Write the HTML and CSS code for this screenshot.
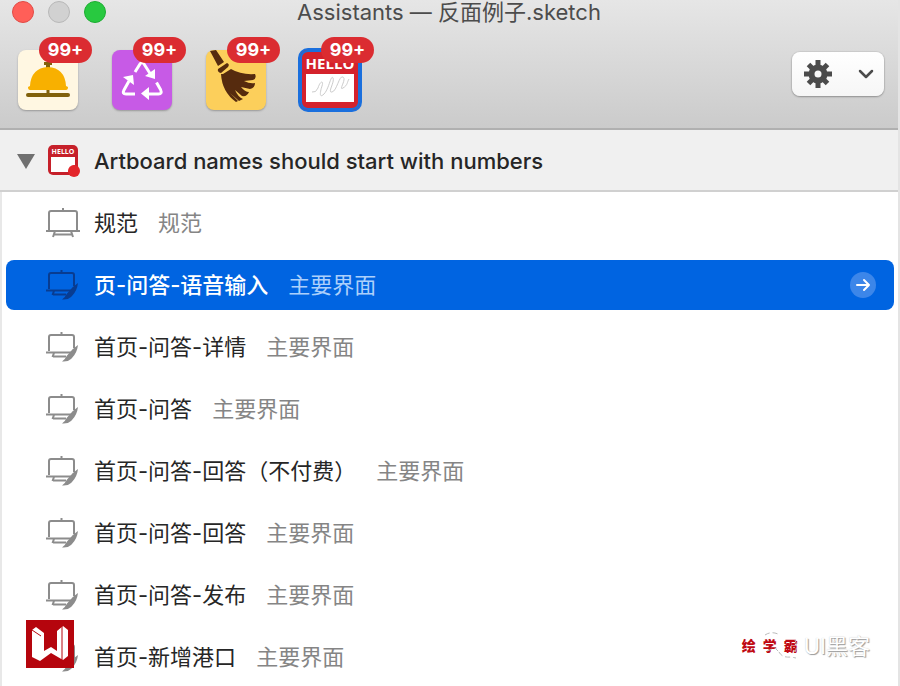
FILE: index.html
```html
<!DOCTYPE html>
<html lang="zh-CN">
<head>
<meta charset="utf-8">
<meta name="viewport" content="width=device-width, initial-scale=1">
<title>Assistants — 反面例子.sketch</title>
<link rel="stylesheet" href="styles.css">
</head>
<body>
<svg class="defs" aria-hidden="true">
  <symbol id="board" viewBox="0 0 36 32">
    <path d="M3 23V6q0-2 2-2h24q2 0 2 2v17M0 24h34M17 4V1M9 24l-2 6M25 24l2 6M8 27.500h18" fill="none" stroke="currentColor" stroke-width="2"/>
  </symbol>
  <symbol id="board-pen" viewBox="0 0 36 32">
    <path d="M3 20V6q0-2 2-2h21q2 0 2 2v11M0 21.500h25M15.500 4V1M8 22l-1.500 4M7 25.500h13" fill="none" stroke="currentColor" stroke-width="2"/>
    <path d="M32 14q-5 3-10 9.500l-1 1q-2 4-5 6 6 .5 9-2.500l1-1q5-5 6-13z" fill="currentColor"/>
  </symbol>
</svg>
<div class="window">
  <header class="toolbar">
    <div class="titlebar">
      <div class="lights">
        <button class="light close" aria-label="Close"></button>
        <button class="light idle" aria-label="Minimize"></button>
        <button class="light grow" aria-label="Zoom"></button>
      </div>
      <h1 class="title">Assistants — 反面例子.sketch</h1>
    </div>
    <div class="tools">
      <nav class="assistants">
        <button class="assistant cream" aria-label="Reception">
          <svg viewBox="0 0 60 60" aria-hidden="true">
            <path d="M26 12h8v3h-2v4h-4v-4h-2zM28.500 39h3v6h-3z" fill="#81610b"/>
            <path d="M12 36q1-18 18-19 17 1 18 19l2 1q0 3-2 3H12q-2 0-2-3z" fill="#f8b000"/>
            <rect x="8" y="43" width="44" height="4" rx="2" fill="#81610b"/>
          </svg>
          <span class="badge">99+</span>
        </button>
        <button class="assistant purple" aria-label="Recycle">
          <svg viewBox="0 0 60 60" aria-hidden="true">
            <path d="M23 22l5-8q2-3 4 0l7 11M44.500 32.500l4 7q2 4.500-2 4.500H36M23 44H14q-4 0-2-4l5-9" fill="none" stroke="#fff" stroke-width="3" stroke-linejoin="round"/>
            <path d="M43 19v10l-10-3zM37 37v13l-8-6.500zM11 27l10-2 1 10z" fill="#fff"/>
          </svg>
          <span class="badge">99+</span>
        </button>
        <button class="assistant yellow" aria-label="Tidy">
          <svg viewBox="0 0 60 60" aria-hidden="true">
            <path d="M4 1l6-1 8 12-6 4zM12 19l9-6q3 1 1 4l-7 6q-4-1-3-4z" fill="#562b0e"/>
            <path d="M17 24l8-5q10 6 24 5 2 4-2 6l-9 1q6 3 11 2 0 5-5 6l-9-2q4 5 8 5-2 5-7 4l-7-6q3 7 8 9l-4 2-9-8 8 8-2 1q-14-10-15-28z" fill="#562b0e"/>
          </svg>
          <span class="badge">99+</span>
        </button>
        <button class="assistant hello" aria-label="Naming" aria-pressed="true">
          <svg viewBox="0 0 60 60" aria-hidden="true">
            <text x="30" y="19" class="hello-text" text-anchor="middle">HELLO</text>
            <rect x="6" y="24" width="48" height="28" fill="#fff"/>
            <path d="M12 42q4 1 6-4c2-7 6-8 4-2s-3 13 2 8 7-20 9-16-6 15-1 14 7-17 11-15-5 14 0 11 4-6 6-9" fill="none" stroke="#ccc" stroke-width="1"/>
          </svg>
          <span class="badge">99+</span>
        </button>
      </nav>
      <button class="settings" aria-label="Settings">
        <svg class="gear" viewBox="0 0 28 28" aria-hidden="true">
          <g stroke="#4b4b4b" stroke-width="5">
            <path d="M14 0v28M0 14h28M4.500 4.500l19 19M4.500 23.500l19-19"/>
          </g>
          <circle cx="14" cy="14" r="9.500" fill="#4b4b4b"/>
          <circle cx="14" cy="14" r="3.500" fill="#f8f8f8"/>
        </svg>
        <svg class="chevron" viewBox="0 0 16 10" aria-hidden="true">
          <path d="M2 2l6 6 6-6" fill="none" stroke="#4b4b4b" stroke-width="2.500" stroke-linecap="round" stroke-linejoin="round"/>
        </svg>
      </button>
    </div>
  </header>
  <main class="results">
    <h2 class="group">
      <svg class="disclosure" viewBox="0 0 18 15" aria-hidden="true"><path d="M0 0h18L9 15z" fill="#707070"/></svg>
      <svg class="group-icon" viewBox="0 0 34 34" aria-hidden="true">
        <rect x="1" y="1" width="30" height="30" rx="5" fill="#c6202a"/>
        <text x="16" y="10" class="mini-text" text-anchor="middle">HELLO</text>
        <path d="M4 13h24v8q-6 1-7 7H4z" fill="#fff"/>
        <circle cx="27" cy="27" r="6" fill="#e3252b"/>
      </svg>
      <span>Artboard names should start with numbers</span>
    </h2>
    <ul class="list">
      <li class="row"><svg class="icon" aria-hidden="true"><use href="#board"/></svg><span class="name">规范</span><span class="page">规范</span></li>
      <li class="row selected"><svg class="icon" aria-hidden="true"><use href="#board-pen"/></svg><span class="name">页-问答-语音输入</span><span class="page">主要界面</span>
        <button class="go" aria-label="Show layer"><svg viewBox="0 0 26 26" aria-hidden="true"><path d="M7 13h12M14 8l5 5-5 5" fill="none" stroke="#fff" stroke-width="2" stroke-linecap="round" stroke-linejoin="round"/></svg></button></li>
      <li class="row"><svg class="icon" aria-hidden="true"><use href="#board-pen"/></svg><span class="name">首页-问答-详情</span><span class="page">主要界面</span></li>
      <li class="row"><svg class="icon" aria-hidden="true"><use href="#board-pen"/></svg><span class="name">首页-问答</span><span class="page">主要界面</span></li>
      <li class="row"><svg class="icon" aria-hidden="true"><use href="#board-pen"/></svg><span class="name">首页-问答-回答（不付费）</span><span class="page">主要界面</span></li>
      <li class="row"><svg class="icon" aria-hidden="true"><use href="#board-pen"/></svg><span class="name">首页-问答-回答</span><span class="page">主要界面</span></li>
      <li class="row"><svg class="icon" aria-hidden="true"><use href="#board-pen"/></svg><span class="name">首页-问答-发布</span><span class="page">主要界面</span></li>
      <li class="row"><svg class="icon" aria-hidden="true"><use href="#board-pen"/></svg><span class="name">首页-新增港口</span><span class="page">主要界面</span></li>
    </ul>
  </main>
  <svg class="stamp" viewBox="0 0 48 48" aria-hidden="true">
    <rect width="48" height="48" fill="#b5050d"/>
    <path d="M6 10l4-3 8 6v18l7-4 6 4V11l6-5 5 4v26l-5 4-12-7-11 8-8-4z" fill="#fff"/>
    <path d="M6 10l9 6M36 6v34" fill="none" stroke="#b5050d" stroke-width="1"/>
  </svg>
  <div class="credit">
    <span class="credit-red"><span>绘</span> <span>学</span> <span>霸</span></span>
    <svg class="bubbles" viewBox="0 0 36 28" aria-hidden="true">
      <path d="M3 3q6-4 13-1M5 19l8-3 4 4M17 20q3 6 12 5l5 1M33 8q3 6 0 12" fill="none" stroke="#bbb" stroke-width="1" stroke-dasharray="5 3"/>
    </svg>
    <span class="credit-ghost">UI黑客</span>
  </div>
</div>
</body>
</html>
```
FILE: styles.css
```css
* { box-sizing: border-box; }

body {
  margin: 0;
  background: #fff;
  color: #262626;
  font: 22px/30px Inter, "Noto Sans CJK SC", sans-serif;
}

button {
  padding: 0;
  border: 0;
  font: inherit;
}

.defs {
  position: absolute;
  width: 0;
  height: 0;
}

.window {
  position: relative;
  height: 100vh;
  overflow: hidden;
  border-right: 2px solid #e4e4e4;
}

.toolbar {
  height: 130px;
  border-bottom: 2px solid #b0b0b0;
  background: linear-gradient(#e6e6e6, #cbcbcb);
}

.titlebar {
  display: grid;
  grid-template-columns: 1fr auto 1fr;
  height: 26px;
}

.lights {
  display: flex;
  gap: 14px;
  padding: 1px 0 0 12px;
}

.light {
  width: 22px;
  height: 22px;
  border: 1px solid;
  border-radius: 50%;
}

.close { background: #ff5f58; border-color: #e14b46; }
.idle { background: #d1d1d1; border-color: #b8b8b8; }
.grow { background: #28c940; border-color: #1dad32; }

.title {
  margin: 0;
  color: #4c4c4c;
  font-size: 22px;
  font-weight: 400;
  line-height: 24px;
}

.tools {
  display: flex;
  justify-content: space-between;
  padding: 24px 14px 0 18px;
}

.assistants {
  display: flex;
  gap: 34px;
}

.assistant {
  position: relative;
  width: 60px;
  height: 60px;
  border-radius: 8px;
  box-shadow: 0 1px 2px #0004;
}

.assistant svg {
  display: block;
  width: 60px;
  height: 60px;
}

.cream { background: #fff7e2; }
.purple { background: #c75ae6; }
.yellow { background: #fccf5b; }

.hello {
  background: #d4222c;
  box-shadow: inset 0 0 0 2px #1a6fdd, 0 0 0 2px #1a6fdd;
}

.hello-text {
  fill: #fff;
  font: 700 15px "Open Sans", sans-serif;
}

.mini-text {
  fill: #fff;
  font: 700 7px "Open Sans", sans-serif;
}

.badge {
  position: absolute;
  top: -13px;
  left: 21px;
  width: 53px;
  height: 26px;
  border-radius: 13px;
  background: #db2c31;
  color: #fff;
  font-size: 18px;
  font-weight: 700;
  line-height: 26px;
  text-align: center;
}

.settings {
  display: flex;
  align-items: center;
  justify-content: space-between;
  width: 92px;
  height: 44px;
  margin-top: 2px;
  padding: 0 10px 0 12px;
  border-radius: 8px;
  background: linear-gradient(#fff, #f6f6f6);
  box-shadow: 0 0 1px 1px #0001, 0 1px 2px #0004;
}

.gear { width: 28px; height: 28px; }
.chevron { width: 16px; height: 10px; }

.group {
  display: flex;
  align-items: center;
  height: 62px;
  margin: 0;
  padding: 2px 0 0 17px;
  border-bottom: 2px solid #d0d0d0;
  background: #f0f0f0;
  font-size: 22px;
  font-weight: 500;
}

.disclosure { width: 18px; height: 15px; }

.group-icon {
  width: 34px;
  height: 34px;
  margin: 0 13px 0 12px;
}

.list {
  display: flex;
  flex-direction: column;
  gap: 12px;
  margin: 0;
  padding: 6px 4px 6px 6px;
  border-left: 2px solid #e8e8e8;
  list-style: none;
}

.row {
  display: flex;
  align-items: center;
  height: 50px;
  padding-left: 38px;
  border-radius: 8px;
  white-space: nowrap;
}

.icon {
  width: 36px;
  height: 32px;
  margin-right: 12px;
  color: #8c8c8c;
}

.page {
  margin-left: 20px;
  color: #858585;
}

.selected {
  margin-left: -2px;
  padding: 0 18px 0 40px;
  background: #0064e1;
  color: #fff;
  font-weight: 500;
}

.selected .icon { color: #083c91; }

.selected .page {
  color: #acd0fb;
  font-weight: 400;
}

.go {
  width: 26px;
  height: 26px;
  margin-left: auto;
  border-radius: 50%;
  background: #3c86e9;
}

.go svg { display: block; }

.stamp {
  position: absolute;
  bottom: 18px;
  left: 26px;
  width: 48px;
  height: 48px;
}

.credit {
  position: absolute;
  right: 28px;
  bottom: 25px;
  display: flex;
  align-items: center;
}

.credit-red {
  display: flex;
  gap: 7px;
  color: #c00a14;
  font-size: 14px;
  font-weight: 900;
}

.bubbles {
  width: 36px;
  height: 28px;
  margin: 0 6px 0 -36px;
}

.credit-ghost {
  color: #fff;
  text-shadow: 1px 1px 1px #999, 0 0 1px #ccc;
}
```
